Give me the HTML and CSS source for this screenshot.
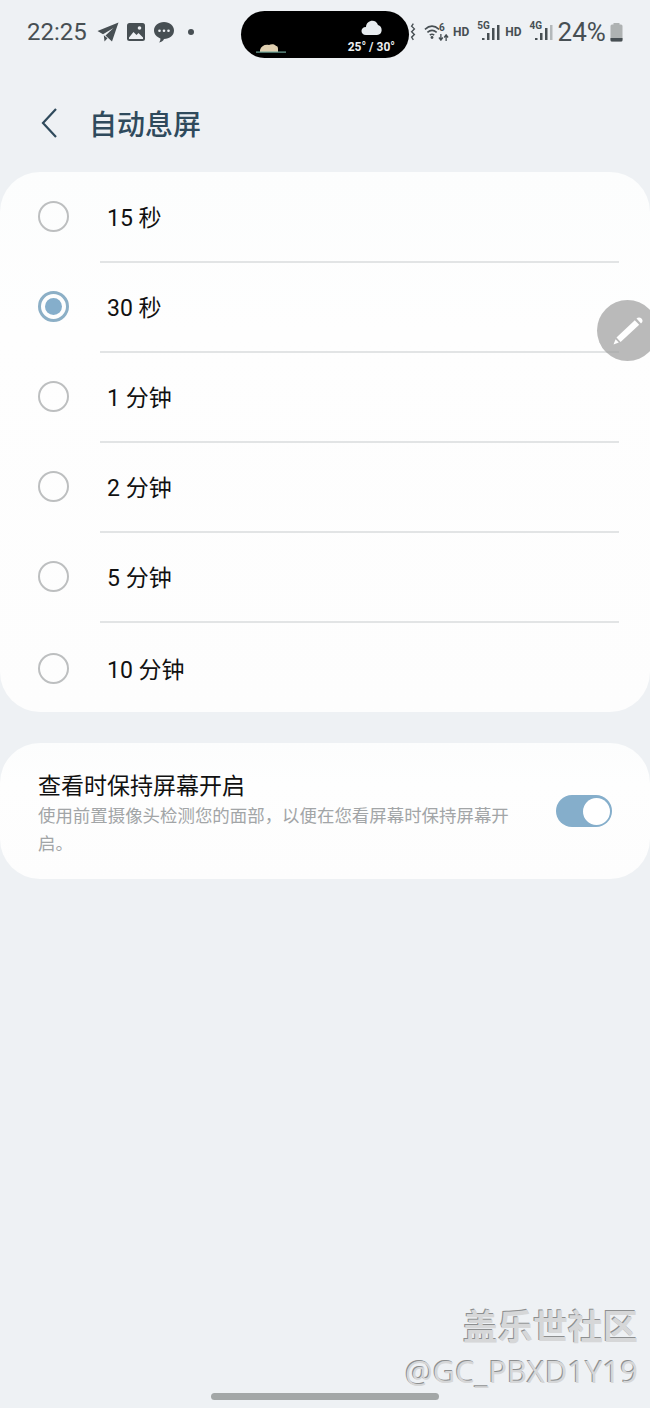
FILE: index.html
```html
<!DOCTYPE html>
<html lang="zh-CN">
<head>
    <meta charset="UTF-8">
    <meta name="viewport" content="width=device-width, initial-scale=1.0">
    <title>自动息屏</title>
    <link rel="stylesheet" href="styles.css">
</head>
<body>
    <div class="screen">
        <!-- Status bar -->
        <div class="status-bar">
            <div class="status-left">
                <span class="clock">22:25</span>
                <svg width="22" height="20" viewBox="0 0 22 20"><path d="M21.5.5 .5 9l5.500 3.200L16.500 6 8.500 13.500 15 19.500zM6.800 13.200 7.500 19.500l3-3.300z" fill="#474f53"/></svg>
                <svg width="20" height="20" viewBox="0 0 20 20"><rect x="1" y="1" width="18" height="18" rx="2.5" fill="#474f53"/><path d="M3 15.500 7.500 10l3 3 2-2 4.500 4.500V17H3z" fill="#eef1f4"/><circle cx="13.500" cy="6" r="1.800" fill="#eef1f4"/></svg>
                <svg width="22" height="22" viewBox="0 0 22 22"><path d="M11 1c5.800 0 10 3.700 10 8.600s-4.200 8.500-10 8.500c-.6 2-2.500 3-5 3.300 1-1 1.500-2.300 1.400-4C3.600 16.100 1 13.200 1 9.600 1 4.700 5.200 1 11 1z" fill="#474f53"/><circle cx="6.500" cy="9.800" r="1.300" fill="#eef1f4"/><circle cx="11" cy="9.800" r="1.300" fill="#eef1f4"/><circle cx="15.500" cy="9.800" r="1.300" fill="#eef1f4"/></svg>
                <span class="dot"></span>
            </div>
            <div class="pill">
                <svg class="pill-scene" width="30" height="12" viewBox="0 0 30 12"><path d="M4 8c1-4 5-6 9-5 2-1 6-1 7 1 2 0 2 2 2 4v2H4z" fill="#e0cfb0"/><rect x="0" y="9.500" width="30" height="1.200" fill="#6fa59a"/></svg>
                <div class="pill-weather">
                    <svg width="21" height="17" viewBox="0 0 21 17"><path d="M5 16c-6 0-6-8 0-8 0-7 10-9 12-2 5 1 5 10-1 10z" fill="#e8ecef"/></svg>
                    <span class="pill-temp">25° / 30°</span>
                </div>
            </div>
            <div class="status-right">
                <svg class="vibrate" width="6" height="18" viewBox="0 0 8 26"><path d="M4.500 1 2 4.500l4 4-4 4 4 4-4 4 2.500 4" fill="none" stroke="#474f53" stroke-width="2"/></svg>
                <div class="wifi">
                    <svg width="16" height="15" viewBox="0 0 18 17"><g fill="none" stroke="#474f53" stroke-width="1.800"><path d="M1 6c5-4.500 11-4.500 16 0"/><path d="M3.800 9.500c3.500-3 7-3 10.500 0"/><path d="M6.500 12.500c2-1.500 3-1.500 5 0"/></g><circle cx="9" cy="15.300" r="1.600" fill="#474f53"/></svg>
                    <span class="wifi-six">6</span>
                    <svg class="wifi-arrows" width="11" height="7" viewBox="0 0 12 8"><path d="M3 0v6M.8 4 3 7l2.200-3M9 8V2M6.800 4 9 1l2.200 3" fill="none" stroke="#474f53" stroke-width="1.500"/></svg>
                </div>
                <span class="hd">HD</span>
                <div class="signal">
                    <span class="net">5G</span>
                    <svg width="18" height="20" viewBox="0 0 18 20"><g fill="#474f53"><rect x="0" y="17" width="2.500" height="2"/><rect x="5" y="12" width="2.500" height="7"/><rect x="10" y="7" width="2.500" height="12"/><rect x="15" y="4" width="2.500" height="15"/></g></svg>
                </div>
                <span class="hd">HD</span>
                <div class="signal">
                    <span class="net">4G</span>
                    <svg width="18" height="20" viewBox="0 0 18 20"><g fill="#474f53"><rect x="0" y="17" width="2.500" height="2"/><rect x="5" y="12" width="2.500" height="7"/><rect x="10" y="7" width="2.500" height="12"/></g><rect x="15" y="4" width="2.500" height="15" fill="#b3b8ba"/></svg>
                </div>
                <span class="battery-text">24%</span>
                <svg width="13" height="19" viewBox="0 0 13 19"><rect x="3.500" y="0" width="6" height="2" fill="#aeb2b2"/><rect x="0.500" y="1.500" width="12" height="17" rx="1.500" fill="#aeb2b2"/><path d="M.5 15h12v2a1.500 1.500 0 0 1-1.500 1.500H2A1.500 1.500 0 0 1 .5 17z" fill="#474f53"/></svg>
            </div>
        </div>

        <!-- Header -->
        <div class="header">
            <svg class="back" width="20" height="32" viewBox="0 0 20 32"><path d="M16 2 3 16l13 14" fill="none" stroke="#2f4a5c" stroke-width="2.200"/></svg>
            <h1 class="title">自动息屏</h1>
        </div>

        <!-- Timeout options -->
        <div class="card options">
            <div class="option"><span class="radio"></span><span class="option-label">15 秒</span></div>
            <div class="option"><span class="radio checked"></span><span class="option-label">30 秒</span></div>
            <div class="option"><span class="radio"></span><span class="option-label">1 分钟</span></div>
            <div class="option"><span class="radio"></span><span class="option-label">2 分钟</span></div>
            <div class="option"><span class="radio"></span><span class="option-label">5 分钟</span></div>
            <div class="option"><span class="radio"></span><span class="option-label">10 分钟</span></div>
        </div>

        <!-- Keep screen on -->
        <div class="card keep-on">
            <div class="keep-text">
                <div class="keep-title">查看时保持屏幕开启</div>
                <div class="keep-desc">使用前置摄像头检测您的面部，以便在您看屏幕时保持屏幕开启。</div>
            </div>
            <div class="switch"><span class="knob"></span></div>
        </div>

        <!-- Floating edit handle -->
        <div class="edit-handle">
            <svg width="30" height="28" viewBox="0 0 30 28"><g fill="#fff"><path d="M21.800 3.200 26.200 7.800 7.600 25 3.500 20.500z"/><path d="M23.500 1.500C25 0 27 0 28.500 1.500 30 3 30 5 28 6.500z"/><path d="M2.600 22.200 5.800 25.600 .5 27.500z"/></g></svg>
        </div>

        <!-- Watermark -->
        <div class="watermark">
            <div class="watermark-name">盖乐世社区</div>
            <div class="watermark-user">@GC_PBXD1Y19</div>
        </div>

        <div class="home-bar"></div>
    </div>
</body>
</html>
```

FILE: styles.css
```css
* {
    box-sizing: border-box;
}

html, body {
    margin: 0;
    padding: 0;
}

body {
    font-family: 'Roboto', 'Noto Sans CJK SC', sans-serif;
    background-color: #eef1f4;
}

.screen {
    position: relative;
    width: 650px;
    height: 1408px;
    overflow: hidden;
    background-color: #eef1f4;
}

/* Status bar */
.status-bar {
    display: flex;
    align-items: flex-start;
    height: 60px;
    padding-top: 11px;
    padding-left: 27px;
    color: #474f53;
}

.status-left {
    display: flex;
    align-items: center;
    width: 214px;
    height: 42px;
    gap: 7px;
}

.clock {
    font-size: 24px;
    width: 63px;
}

.dot {
    width: 6px;
    height: 6px;
    margin-left: 6px;
    border-radius: 50%;
    background-color: #474f53;
}

.pill {
    display: flex;
    justify-content: space-between;
    flex-shrink: 0;
    width: 168px;
    height: 47px;
    padding: 0 14px 0 15px;
    border-radius: 24px;
    background-color: #000;
}

.pill-scene {
    margin-top: 31px;
}

.pill-weather {
    display: flex;
    flex-direction: column;
    align-items: center;
    padding-top: 8px;
}

.pill-temp {
    font-size: 12px;
    font-weight: 700;
    line-height: 16px;
    margin-top: 3px;
    color: #eceff1;
}

.status-right {
    display: flex;
    align-items: center;
    height: 42px;
    margin-left: -2px;
}

.vibrate {
    margin-left: 3px;
}

.wifi {
    position: relative;
    width: 26px;
    height: 16px;
    margin-left: 8px;
}

.wifi svg {
    display: block;
}

.wifi-six {
    position: absolute;
    top: -1px;
    left: 15px;
    font-size: 10px;
    line-height: 10px;
    font-weight: 700;
}

.wifi .wifi-arrows {
    position: absolute;
    top: 10px;
    left: 14px;
}

.hd {
    font-size: 12px;
    font-weight: 700;
    margin-left: 3px;
}

.hd + .signal {
    margin-left: 8px;
}

.signal + .hd {
    margin-left: 6px;
}

.signal {
    position: relative;
    width: 22px;
    height: 20px;
}

.signal svg {
    position: absolute;
    left: 5px;
    top: -1px;
}

.net {
    position: absolute;
    top: -1px;
    left: 0;
    font-size: 10px;
    line-height: 10px;
    font-weight: 700;
}

.battery-text {
    font-size: 26px;
    margin-left: 6px;
    margin-right: 4px;
}

/* Header */
.header {
    display: flex;
    align-items: center;
    height: 112px;
    padding-top: 13px;
    padding-left: 40px;
}

.title {
    margin: 0 0 0 29px;
    font-size: 28px;
    font-weight: 500;
    color: #2f4a5c;
}

/* Cards */
.card {
    background: linear-gradient(#fcfdfd, #fefefe 30%, #fdfdfd);
    border-radius: 40px;
}

.options {
    height: 540px;
}

.option {
    position: relative;
    display: flex;
    align-items: center;
    height: 90px;
    padding-left: 38px;
    padding-bottom: 1px;
}

.option:last-child {
    padding-top: 4px;
}

.option + .option::before {
    content: "";
    position: absolute;
    top: -1px;
    left: 100px;
    right: 31px;
    height: 2px;
    background-color: #e2e4e5;
}

.radio {
    flex-shrink: 0;
    width: 31px;
    height: 31px;
    border: 2.5px solid #bdbfc0;
    border-radius: 50%;
}

.radio.checked {
    display: flex;
    align-items: center;
    justify-content: center;
    border: 3px solid #8cafc6;
}

.radio.checked::after {
    content: "";
    width: 17px;
    height: 17px;
    border-radius: 50%;
    background-color: #85aecb;
}

.option-label {
    margin-left: 38px;
    margin-bottom: 2px;
    font-size: 23px;
    color: #111;
}

.keep-on {
    display: flex;
    align-items: center;
    justify-content: space-between;
    height: 136px;
    margin-top: 31px;
    padding: 0 38px;
}

.keep-text {
    width: 480px;
    padding-top: 7px;
}

.keep-title {
    font-size: 23px;
    line-height: 31px;
    color: #111;
}

.keep-desc {
    font-size: 17.45px;
    line-height: 28px;
    color: #a2a5a7;
}

.switch {
    display: flex;
    justify-content: flex-end;
    align-items: center;
    width: 56px;
    height: 32px;
    padding-right: 2px;
    border-radius: 16px;
    background-color: #85aecb;
}

.knob {
    width: 27px;
    height: 27px;
    border-radius: 50%;
    background-color: #fff;
}

/* Overlays */
.edit-handle {
    position: absolute;
    top: 300px;
    left: 597px;
    display: flex;
    align-items: center;
    justify-content: center;
    width: 61px;
    height: 61px;
    border-radius: 50%;
    background-color: rgba(160, 160, 160, 0.73);
}

.watermark {
    position: absolute;
    top: 1301px;
    right: 12px;
    text-align: right;
    color: #d6d7d8;
    text-shadow: -1px -1px 0 #8d8f90;
}

.watermark-name {
    font-family: 'Noto Sans CJK SC', sans-serif;
    font-size: 35px;
    font-weight: 700;
    line-height: 48px;
}

.watermark-user {
    font-family: 'Open Sans', sans-serif;
    font-size: 31px;
    line-height: 44px;
}

.home-bar {
    position: absolute;
    top: 1393px;
    left: 211px;
    width: 228px;
    height: 7px;
    border-radius: 4px;
    background-color: #a3a7a7;
}
```
